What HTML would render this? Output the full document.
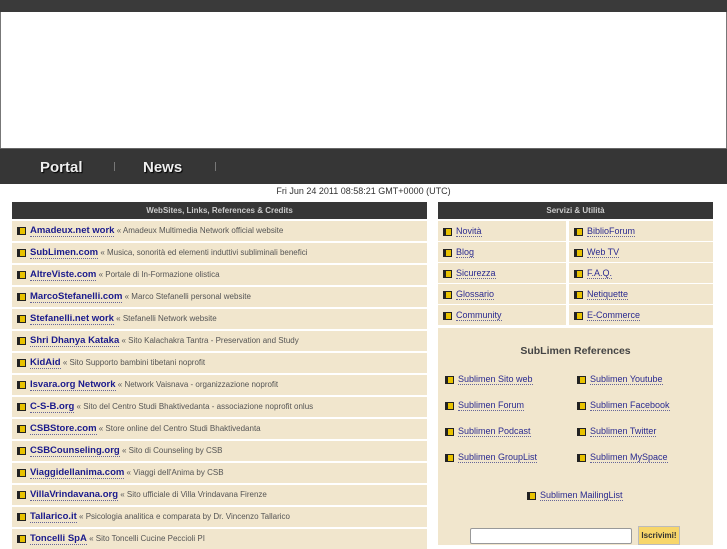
<!DOCTYPE html>
<html><head><meta charset="utf-8"><style>
body{margin:0;width:727px;height:545px;overflow:hidden;background:#fff;font-family:"Liberation Sans",sans-serif;position:relative}
.top{position:absolute;left:0;top:0;width:727px;height:12px;background:#3a3a3a}
.hdr{position:absolute;left:0;top:12px;width:725px;height:136px;border-left:1px solid #777;border-right:1px solid #777;background:#fff}
.nav{position:absolute;left:0;top:148px;width:727px;height:36px;background:#363636;border-top:1px solid #666;box-sizing:border-box}
.nav span{position:absolute;top:10px;color:#eee;font-weight:bold;font-size:15px;text-shadow:1px 1px 1px #000}
.nav i{position:absolute;top:13px;width:1px;height:9px;background:#777}
.date{position:absolute;left:0;width:727px;top:186px;text-align:center;font-size:9px;color:#333}
.bh{position:absolute;height:17px;background:#363636;color:#ccc;font-size:8px;font-weight:bold;text-align:center;line-height:17px}
.row{position:absolute;height:20px;background:#f1e6cd;font-size:8px;color:#555;line-height:20px;white-space:nowrap}
.ic{display:inline-block;width:7px;height:6px;background:#e8c200;border:1px solid #222;vertical-align:-2px;margin:0 4px 0 5px;box-shadow:inset 2px 0 0 #222}
.row a{color:#1a1a8c;font-weight:bold;font-size:9.5px;text-decoration:none;border-bottom:1px dotted #669}
.s a{font-weight:normal;font-size:9px;color:#2a2a90;border-bottom:1px dotted #669}
.ref{position:absolute;left:438px;top:328px;width:275px;height:217px;background:#f1e6cd}
.ref .t{position:absolute;left:0;width:275px;top:17px;text-align:center;font-weight:bold;font-size:10.5px;color:#444}
.ref div.l{position:absolute;font-size:9px;white-space:nowrap}
.ref a{color:#2a2a90;text-decoration:none;border-bottom:1px dotted #669}
.ref .ic{margin:0 4px 0 0}
</style></head><body>
<div class="top"></div><div class="hdr"></div>
<div class="nav"><span style="left:40px">Portal</span><i style="left:114px"></i><span style="left:143px">News</span><i style="left:215px"></i></div>
<div class="date">Fri Jun 24 2011 08:58:21 GMT+0000 (UTC)</div>
<div class="bh" style="left:12px;top:202px;width:415px">WebSites, Links, References &amp; Credits</div>
<div class="bh" style="left:438px;top:202px;width:275px">Servizi &amp; Utilità</div>

<div class="row" style="left:12px;top:221px;width:415px"><span class="ic"></span><a>Amadeux.net work</a> « Amadeux Multimedia Network official website</div>
<div class="row" style="left:12px;top:243px;width:415px"><span class="ic"></span><a>SubLimen.com</a> « Musica, sonorità ed elementi induttivi subliminali benefici</div>
<div class="row" style="left:12px;top:265px;width:415px"><span class="ic"></span><a>AltreViste.com</a> « Portale di In-Formazione olistica</div>
<div class="row" style="left:12px;top:287px;width:415px"><span class="ic"></span><a>MarcoStefanelli.com</a> « Marco Stefanelli personal website</div>
<div class="row" style="left:12px;top:309px;width:415px"><span class="ic"></span><a>Stefanelli.net work</a> « Stefanelli Network website</div>
<div class="row" style="left:12px;top:331px;width:415px"><span class="ic"></span><a>Shri Dhanya Kataka</a> « Sito Kalachakra Tantra - Preservation and Study</div>
<div class="row" style="left:12px;top:353px;width:415px"><span class="ic"></span><a>KidAid</a> « Sito Supporto bambini tibetani noprofit</div>
<div class="row" style="left:12px;top:375px;width:415px"><span class="ic"></span><a>Isvara.org Network</a> « Network Vaisnava - organizzazione noprofit</div>
<div class="row" style="left:12px;top:397px;width:415px"><span class="ic"></span><a>C-S-B.org</a> « Sito del Centro Studi Bhaktivedanta - associazione noprofit onlus</div>
<div class="row" style="left:12px;top:419px;width:415px"><span class="ic"></span><a>CSBStore.com</a> « Store online del Centro Studi Bhaktivedanta</div>
<div class="row" style="left:12px;top:441px;width:415px"><span class="ic"></span><a>CSBCounseling.org</a> « Sito di Counseling by CSB</div>
<div class="row" style="left:12px;top:463px;width:415px"><span class="ic"></span><a>Viaggidellanima.com</a> « Viaggi dell'Anima by CSB</div>
<div class="row" style="left:12px;top:485px;width:415px"><span class="ic"></span><a>VillaVrindavana.org</a> « Sito ufficiale di Villa Vrindavana Firenze</div>
<div class="row" style="left:12px;top:507px;width:415px"><span class="ic"></span><a>Tallarico.it</a> « Psicologia analitica e comparata by Dr. Vincenzo Tallarico</div>
<div class="row" style="left:12px;top:529px;width:415px"><span class="ic"></span><a>Toncelli SpA</a> « Sito Toncelli Cucine Peccioli PI</div>

<div class="row s" style="left:438px;top:221px;width:128px"><span class="ic"></span><a>Novità</a></div>
<div class="row s" style="left:569px;top:221px;width:144px"><span class="ic"></span><a>BiblioForum</a></div>
<div class="row s" style="left:438px;top:242px;width:128px"><span class="ic"></span><a>Blog</a></div>
<div class="row s" style="left:569px;top:242px;width:144px"><span class="ic"></span><a>Web TV</a></div>
<div class="row s" style="left:438px;top:263px;width:128px"><span class="ic"></span><a>Sicurezza</a></div>
<div class="row s" style="left:569px;top:263px;width:144px"><span class="ic"></span><a>F.A.Q.</a></div>
<div class="row s" style="left:438px;top:284px;width:128px"><span class="ic"></span><a>Glossario</a></div>
<div class="row s" style="left:569px;top:284px;width:144px"><span class="ic"></span><a>Netiquette</a></div>
<div class="row s" style="left:438px;top:305px;width:128px"><span class="ic"></span><a>Community</a></div>
<div class="row s" style="left:569px;top:305px;width:144px"><span class="ic"></span><a>E-Commerce</a></div>

<div class="ref">
<div class="t">SubLimen References</div>
<div class="l" style="left:7px;top:46px"><span class="ic"></span><a>Sublimen Sito web</a></div>
<div class="l" style="left:139px;top:46px"><span class="ic"></span><a>Sublimen Youtube</a></div>
<div class="l" style="left:7px;top:72px"><span class="ic"></span><a>Sublimen Forum</a></div>
<div class="l" style="left:139px;top:72px"><span class="ic"></span><a>Sublimen Facebook</a></div>
<div class="l" style="left:7px;top:98px"><span class="ic"></span><a>Sublimen Podcast</a></div>
<div class="l" style="left:139px;top:98px"><span class="ic"></span><a>Sublimen Twitter</a></div>
<div class="l" style="left:7px;top:124px"><span class="ic"></span><a>Sublimen GroupList</a></div>
<div class="l" style="left:139px;top:124px"><span class="ic"></span><a>Sublimen MySpace</a></div>
<div class="l" style="left:89px;top:162px"><span class="ic"></span><a>Sublimen MailingList</a></div>
<div style="position:absolute;left:32px;top:200px;width:160px;height:14px;background:#fff;border:1px solid #999;border-radius:2px"></div>
<div style="position:absolute;left:200px;top:198px;width:40px;height:17px;background:#f7d66a;border:1px solid #bbb;font-size:8px;font-weight:bold;color:#333;text-align:center;line-height:17px">Iscrivimi!</div>
</div>
</body></html>
